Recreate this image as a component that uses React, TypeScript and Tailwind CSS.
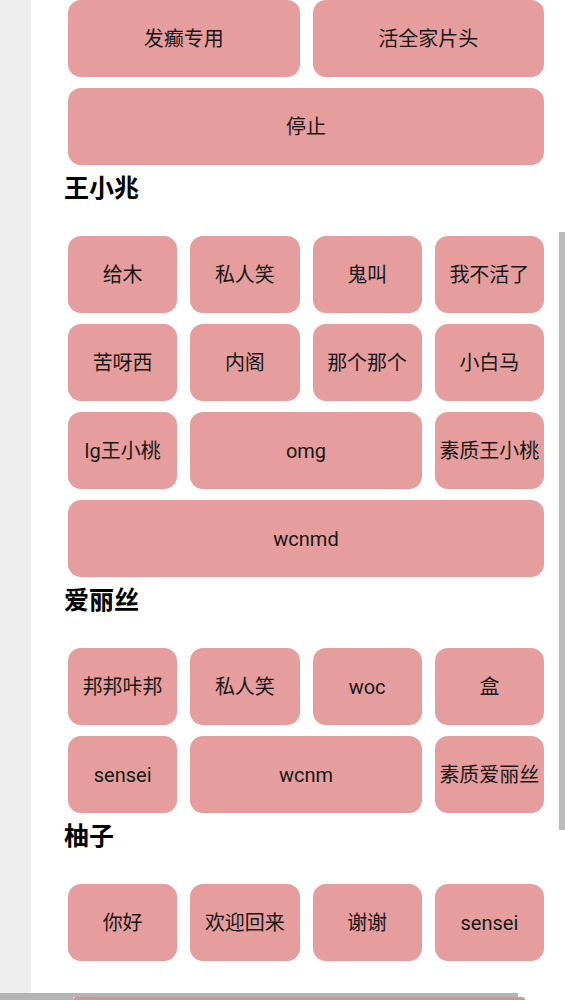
import React from "react";

type Btn = { label: string; span?: number };

const sections: { title?: string; buttons: Btn[] }[] = [
  {
    buttons: [
      { label: "发癫专用", span: 2 },
      { label: "活全家片头", span: 2 },
      { label: "停止", span: 4 },
    ],
  },
  {
    title: "王小兆",
    buttons: [
      { label: "给木" },
      { label: "私人笑" },
      { label: "鬼叫" },
      { label: "我不活了" },
      { label: "苦呀西" },
      { label: "内阁" },
      { label: "那个那个" },
      { label: "小白马" },
      { label: "lg王小桃" },
      { label: "omg", span: 2 },
      { label: "素质王小桃" },
      { label: "wcnmd", span: 4 },
    ],
  },
  {
    title: "爱丽丝",
    buttons: [
      { label: "邦邦咔邦" },
      { label: "私人笑" },
      { label: "woc" },
      { label: "盒" },
      { label: "sensei" },
      { label: "wcnm", span: 2 },
      { label: "素质爱丽丝" },
    ],
  },
  {
    title: "柚子",
    buttons: [
      { label: "你好" },
      { label: "欢迎回来" },
      { label: "谢谢" },
      { label: "sensei" },
    ],
  },
];

function spanClass(span?: number) {
  if (span === 4) return "col-span-4";
  if (span === 2) return "col-span-2";
  return "col-span-1";
}

export default function App() {
  return (
    <div
      className="relative flex w-[565px] h-[1000px] overflow-hidden bg-white"
      style={{ fontFamily: 'Roboto, "Noto Sans CJK SC", sans-serif' }}
    >
      <div className="w-[31px] shrink-0 bg-[#eeeeee]" />
      <div className="flex-1 pl-[33px]">
        {sections.map((s, i) => (
          <div key={i}>
            {s.title && (
              <div
                className="mt-[5px] mb-[34px] h-[32px] leading-[32px] text-[25px] font-bold text-black"
                style={{ fontFamily: '"Noto Sans CJK SC", sans-serif' }}
              >
                {s.title}
              </div>
            )}
            <div className="ml-[4px] w-[476px] grid grid-cols-4 gap-x-[13px] gap-y-[11px]">
              {s.buttons.map((b, j) => (
                <div
                  key={j}
                  className={`${spanClass(b.span)} h-[77px] rounded-[13px] bg-[#e69d9d] flex items-center justify-center text-[20px] text-[#181818] whitespace-nowrap`}
                >
                  {b.label}
                </div>
              ))}
            </div>
          </div>
        ))}
      </div>
      <div className="w-[7px] shrink-0 pt-[232px] pl-[1px]">
        <div className="h-[598px] w-[6px] bg-[#bbbbbb]" />
      </div>
      <div className="absolute left-0 top-[993px] w-[565px] h-[7px] flex flex-col">
        <div className="h-[4px] w-[518px] bg-[#b4b4b4]" />
        <div className="flex h-[3px]">
          <div className="w-[73px] bg-[#b4b4b4]" />
          <div className="w-[452px] rounded-t-[10px] bg-[#d49494]" />
        </div>
      </div>
    </div>
  );
}
